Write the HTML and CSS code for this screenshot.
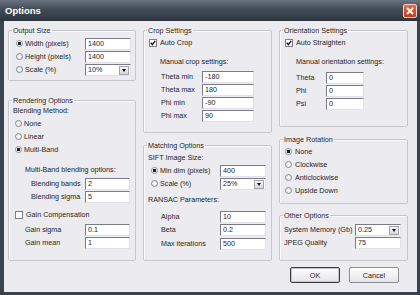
FILE: index.html
```html
<!DOCTYPE html>
<html lang="en">
  <head>
    <meta charset="UTF-8" />
    <title>Options</title>
    <link rel="stylesheet" href="styles.css">
  </head>
  <body>
    <div class="window">
      <div class="titlebar">
        <span class="title">Options</span>
        <span class="close">
          <svg width="8" height="8" viewBox="0 0 8 8"><path d="M1 1 L7 7 M7 1 L1 7" stroke="#fff" stroke-width="1.8" /></svg>
        </span>
      </div>
      <div class="client">
        <div class="col">
          <fieldset class="group output">
            <legend>Output Size</legend>
            <div class="inner">
              <div class="row"><span class="radio on"></span><span class="lbl">Width (pixels)</span><input class="edit" value="1400" /></div>
              <div class="row"><span class="radio"></span><span class="lbl">Height (pixels)</span><input class="edit" value="1400" /></div>
              <div class="row"><span class="radio"></span><span class="lbl">Scale (%)</span><div class="combo"><span>10%</span><span class="drop"><i></i></span></div></div>
            </div>
          </fieldset>

          <fieldset class="group rendering">
            <legend>Rendering Options</legend>
            <div class="inner">
              <div class="row heading">Blending Method:</div>
              <div class="row radios"><span class="radio"></span><span class="lbl">None</span></div>
              <div class="row radios"><span class="radio"></span><span class="lbl">Linear</span></div>
              <div class="row radios"><span class="radio on"></span><span class="lbl">Multi-Band</span></div>
              <div class="row sub">Multi-Band blending options:</div>
              <div class="row field band first"><span class="lbl">Blending bands</span><input class="edit" value="2" /></div>
              <div class="row field band"><span class="lbl">Blending sigma</span><input class="edit" value="5" /></div>
              <div class="row check gain"><span class="box"></span><span class="lbl">Gain Compensation</span></div>
              <div class="row field gainf first"><span class="lbl">Gain sigma</span><input class="edit" value="0.1" /></div>
              <div class="row field gainf"><span class="lbl">Gain mean</span><input class="edit" value="1" /></div>
            </div>
          </fieldset>
        </div>

        <div class="col">
          <fieldset class="group crop">
            <legend>Crop Settings</legend>
            <div class="inner">
              <div class="row check"><span class="box"><svg width="6" height="6" viewBox="0 0 6 6"><path d="M0.8 2.8 L2.3 4.6 L5.2 0.9" fill="none" stroke="#111" stroke-width="1.4" /></svg></span><span class="lbl">Auto Crop</span></div>
              <div class="row sub">Manual crop settings:</div>
              <div class="row field first"><span class="lbl">Theta min</span><input class="edit" value="-180" /></div>
              <div class="row field"><span class="lbl">Theta max</span><input class="edit" value="180" /></div>
              <div class="row field"><span class="lbl">Phi min</span><input class="edit" value="-90" /></div>
              <div class="row field"><span class="lbl">Phi max</span><input class="edit" value="90" /></div>
            </div>
          </fieldset>

          <fieldset class="group matching">
            <legend>Matching Options</legend>
            <div class="inner">
              <div class="row heading">SIFT Image Size:</div>
              <div class="row"><span class="radio on"></span><span class="lbl">Min dim (pixels)</span><input class="edit" value="400" /></div>
              <div class="row"><span class="radio"></span><span class="lbl">Scale (%)</span><div class="combo"><span>25%</span><span class="drop"><i></i></span></div></div>
              <div class="row heading ransac">RANSAC Parameters:</div>
              <div class="row field first"><span class="lbl">Alpha</span><input class="edit" value="10" /></div>
              <div class="row field"><span class="lbl">Beta</span><input class="edit" value="0.2" /></div>
              <div class="row field iter"><span class="lbl">Max iterations</span><input class="edit" value="500" /></div>
            </div>
          </fieldset>
        </div>

        <div class="col">
          <fieldset class="group orientation">
            <legend>Orientation Settings</legend>
            <div class="inner">
              <div class="row check"><span class="box"><svg width="6" height="6" viewBox="0 0 6 6"><path d="M0.8 2.8 L2.3 4.6 L5.2 0.9" fill="none" stroke="#111" stroke-width="1.4" /></svg></span><span class="lbl">Auto Straighten</span></div>
              <div class="row sub">Manual orientation settings:</div>
              <div class="row field first"><span class="lbl">Theta</span><input class="edit" value="0" /></div>
              <div class="row field"><span class="lbl">Phi</span><input class="edit" value="0" /></div>
              <div class="row field"><span class="lbl">Psi</span><input class="edit" value="0" /></div>
            </div>
          </fieldset>

          <fieldset class="group rotation">
            <legend>Image Rotation</legend>
            <div class="inner">
              <div class="row radios"><span class="radio on"></span><span class="lbl">None</span></div>
              <div class="row radios"><span class="radio"></span><span class="lbl">Clockwise</span></div>
              <div class="row radios"><span class="radio"></span><span class="lbl">Anticlockwise</span></div>
              <div class="row radios"><span class="radio"></span><span class="lbl">Upside Down</span></div>
            </div>
          </fieldset>

          <fieldset class="group other">
            <legend>Other Options</legend>
            <div class="inner">
              <div class="row field"><span class="lbl">System Memory (Gb)</span><div class="combo"><span>0.25</span><span class="drop"><i></i></span></div></div>
              <div class="row field"><span class="lbl">JPEG Quality</span><input class="edit" value="75" /></div>
            </div>
          </fieldset>

          <div class="buttons">
            <button class="btn default">OK</button>
            <button class="btn">Cancel</button>
          </div>
        </div>
      </div>
    </div>
  </body>
</html>
```

FILE: styles.css
```css
body {
  margin: 0;
  font-family: "Liberation Sans", Arial, sans-serif;
  font-size: 7.2px;
  color: #1e1e1e;
}
.window {
  width: 420px;
  height: 295px;
  display: flex;
  flex-direction: column;
}
.titlebar {
  height: 21px;
  box-sizing: border-box;
  display: flex;
  align-items: center;
  justify-content: space-between;
  padding: 0 3px 0 5px;
  background: linear-gradient(#6b7581, #454f5b 40%, #2c343e);
}
.title {
  color: #fff;
  font-weight: bold;
  font-size: 9.5px;
}
.close {
  width: 14px;
  height: 14px;
  box-sizing: border-box;
  border: 1px solid #f1cfc4;
  border-radius: 2px;
  background: linear-gradient(#ec6a45, #c93a1d);
  display: flex;
  align-items: center;
  justify-content: center;
}
.client {
  flex: 1;
  background: #ecebef;
  border: solid #3a424d;
  border-width: 0 3px 3px 4px;
  display: grid;
  grid-template-columns: 128px 129px 129px;
  column-gap: 7px;
  padding: 5px 0 0 4px;
  align-items: start;
}
.col {
  display: flex;
  flex-direction: column;
}
.group {
  margin: 0;
  padding: 0;
  min-width: 0;
  box-sizing: border-box;
  border: 1px solid #c7c6cc;
  border-radius: 2px;
  box-shadow: inset 1px 1px 0 #fbfbfd;
}
legend {
  margin-left: 3px;
  padding: 0 1px;
  line-height: 9px;
  height: 9px;
}
.row {
  display: flex;
  align-items: flex-start;
  height: 13px;
  line-height: 12px;
  white-space: nowrap;
}
.lbl {
  flex: 1;
}
.radio {
  width: 7px;
  height: 7px;
  box-sizing: border-box;
  margin: 2px 2px 0 0;
  border: 1px solid #8b8b94;
  border-radius: 50%;
  background: radial-gradient(#ffffff, #dedee4);
}
.radio.on {
  background: radial-gradient(circle, #1d1d1d 1.4px, #fafafa 1.9px);
}
.box {
  width: 8px;
  height: 8px;
  box-sizing: border-box;
  margin: 2px 3px 0 0;
  border: 1px solid #7e7e87;
  background: #fff;
  display: flex;
  align-items: center;
  justify-content: center;
}
.edit {
  width: 46px;
  height: 12px;
  box-sizing: border-box;
  margin: 0;
  padding: 0 0 0 2px;
  border: 1px solid;
  border-color: #7b7b83 #e2e2e6 #e2e2e6 #7b7b83;
  background: #fff;
  font: inherit;
  color: #1e1e1e;
}
.combo {
  width: 46px;
  height: 12px;
  box-sizing: border-box;
  display: flex;
  align-items: center;
  border: 1px solid;
  border-color: #7b7b83 #e2e2e6 #e2e2e6 #7b7b83;
  background: #fff;
}
.combo span:first-child {
  flex: 1;
  padding-left: 2px;
}
.drop {
  width: 10px;
  height: 9px;
  box-sizing: border-box;
  margin-right: 1px;
  border: 1px solid #a3a3ab;
  background: linear-gradient(#f7f7f9, #d7d7dd);
  display: flex;
  align-items: center;
  justify-content: center;
}
.drop i {
  border-top: 3px solid #111;
  border-left: 2.5px solid transparent;
  border-right: 2.5px solid transparent;
}

/* output size */
.output {
  height: 55px;
}
.output .inner {
  padding: 3px 4px 0 7px;
}

/* rendering options */
.rendering {
  height: 165px;
  margin-top: 15px;
}
.rendering .inner {
  padding: 0 5px 0 4px;
}
.rendering .radios {
  padding-left: 2px;
}
.rendering .sub {
  margin-top: 7px;
  padding-left: 12px;
}
.rendering .band {
  padding-left: 18px;
}
.rendering .band.first {
  margin-top: 1px;
}
.rendering .gain {
  margin-top: 5px;
  padding-left: 2px;
}
.rendering .gainf {
  padding-left: 12px;
}
.rendering .gainf.first {
  margin-top: 2px;
}
.rendering .edit {
  width: 45px;
}

/* crop settings */
.crop {
  height: 107px;
}
.crop .inner {
  padding: 2px 17px 0 5px;
}
.crop .sub {
  margin-top: 6px;
  padding-left: 11px;
}
.crop .field {
  padding-left: 12px;
}
.crop .field.first {
  margin-top: 2px;
}
.crop .edit {
  width: 52px;
}

/* matching options */
.matching {
  height: 120px;
  margin-top: 8px;
}
.matching .inner {
  padding: 2px 5px 0 4px;
}
.matching .radio {
  margin-left: 3px;
}
.matching .ransac {
  margin-top: 3px;
}
.matching .field {
  padding-left: 13px;
}
.matching .field.first {
  margin-top: 4px;
}
.matching .iter {
  margin-top: 1px;
}

/* orientation settings */
.orientation {
  height: 101px;
}
.orientation .inner {
  padding: 2px 43px 0 5px;
}
.orientation .sub {
  margin-top: 6px;
  padding-left: 11px;
}
.orientation .field {
  padding-left: 11px;
}
.orientation .field.first {
  margin-top: 3px;
}
.orientation .edit {
  width: 38px;
}

/* image rotation */
.rotation {
  height: 69px;
  margin-top: 8px;
}
.rotation .inner {
  padding: 2px 0 0 5px;
}
.rotation .radio {
  margin-right: 3px;
}

/* other options */
.other {
  height: 50px;
  margin-top: 7px;
}
.other .inner {
  padding: 4px 6px 0 4px;
}

.buttons {
  display: flex;
  gap: 9px;
  margin-top: 6px;
  padding-left: 11px;
}
.btn {
  width: 50px;
  height: 16px;
  margin: 0;
  padding: 0;
  border: 1px solid #8d8d95;
  border-radius: 2px;
  background: linear-gradient(#fdfdfe, #e6e6ea);
  font: inherit;
  color: #1e1e1e;
}
.btn.default {
  border-color: #3b3b43;
  box-shadow: inset 0 0 0 1px #c4c4cc;
}
```
